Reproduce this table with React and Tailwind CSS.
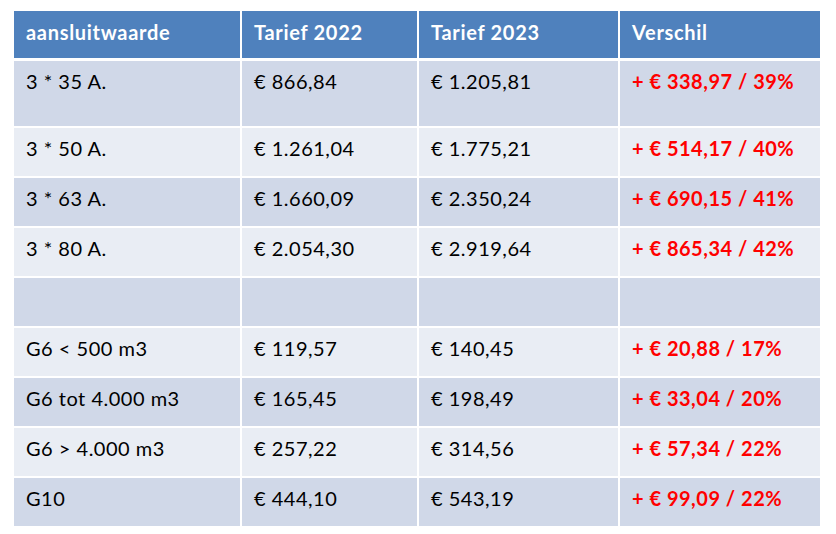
const header = ['aansluitwaarde', 'Tarief 2022', 'Tarief 2023', 'Verschil'];

const rows = [
  ['3 * 35 A.', '€ 866,84', '€ 1.205,81', '+ € 338,97 / 39%'],
  ['3 * 50 A.', '€ 1.261,04', '€ 1.775,21', '+ € 514,17 / 40%'],
  ['3 * 63 A.', '€ 1.660,09', '€ 2.350,24', '+ € 690,15 / 41%'],
  ['3 * 80 A.', '€ 2.054,30', '€ 2.919,64', '+ € 865,34 / 42%'],
  ['', '', '', ''],
  ['G6 < 500 m3', '€ 119,57', '€ 140,45', '+ € 20,88 / 17%'],
  ['G6 tot 4.000 m3', '€ 165,45', '€ 198,49', '+ € 33,04 / 20%'],
  ['G6 > 4.000 m3', '€ 257,22', '€ 314,56', '+ € 57,34 / 22%'],
  ['G10', '€ 444,10', '€ 543,19', '+ € 99,09 / 22%'],
];

export default function App() {
  return (
    <div
      className="w-[836px] h-[534px] bg-white pt-[11px] pl-[14px]"
      style={{ fontFamily: 'Lato, "Open Sans", sans-serif' }}
    >
      <div className="grid grid-cols-[226px_175px_199px_200px] gap-x-[2px] w-[806px]">
        {header.map((h) => (
          <div
            key={h}
            className="h-[47px] bg-[#4f81bd] text-white font-bold text-[20px] leading-[24px] tracking-[0.7px] pl-3 pt-[9px] mb-[3px]"
          >
            {h}
          </div>
        ))}
        {rows.map((row, i) => (
          row.map((cell, j) => (
            <div
              key={i + '-' + j}
              className={`${i === 0 ? 'h-[65px]' : 'h-[48px]'} ${
                i % 2 === 0 ? 'bg-[#d0d8e8]' : 'bg-[#e9edf4]'
              } ${
                j === 3 ? 'text-[#ff0000] font-bold' : 'text-black'
              } ${i < rows.length - 1 ? 'mb-[2px]' : ''} text-[20px] leading-[24px] tracking-[0.5px] pl-3 pt-[8px]`}
            >
              {cell}
            </div>
          ))
        ))}
      </div>
    </div>
  );
}
